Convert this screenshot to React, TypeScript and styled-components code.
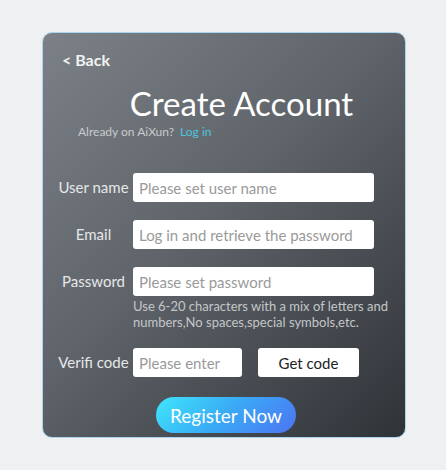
import React from 'react';
import styled, { createGlobalStyle } from 'styled-components';

const GlobalStyle = createGlobalStyle`
  html, body {
    margin: 0;
    padding: 0;
    background: #eef0f2;
    font-family: Lato, "Open Sans", sans-serif;
  }
`;

const Page = styled.div`
  width: 446px;
  height: 470px;
  padding: 32px 0 0 42px;
  box-sizing: border-box;
`;

const Card = styled.div`
  width: 364px;
  height: 406px;
  box-sizing: border-box;
  border: 1px solid #a9d6ec;
  border-radius: 10px;
  background: linear-gradient(135deg, #7c8187 0%, #5f646a 45%, #2f3338 100%);
  padding: 17px 0 0 0;
  display: flex;
  flex-direction: column;
`;

const BackLink = styled.div`
  margin-left: 19px;
  font-size: 16px;
  font-weight: bold;
  color: #f2f2f2;
  line-height: 20px;
`;

const Title = styled.h1`
  margin: 13px 0 0 0;
  text-align: center;
  font-size: 33px;
  font-weight: normal;
  color: #ffffff;
  line-height: 40px;
  padding-left: 35px;
`;

const SubLine = styled.div`
  margin: 1px 0 0 35px;
  font-size: 12px;
  color: #c9cbce;
  line-height: 16px;
`;

const LoginLink = styled.span`
  color: #4cc6dc;
  margin-left: 6px;
`;

const Form = styled.div`
  margin-top: 33px;
  display: flex;
  flex-direction: column;
  gap: 18px;
`;

const Row = styled.div`
  display: flex;
  align-items: flex-start;
`;

const Label = styled.div`
  width: 90px;
  text-align: center;
  font-size: 15px;
  color: #e6e7e9;
  line-height: 29px;
  padding-left: 11px;
  box-sizing: border-box;
  white-space: nowrap;
`;

const Field = styled.div`
  display: flex;
  flex-direction: column;
`;

const Input = styled.input<{ $w: number }>`
  width: ${p => p.$w}px;
  height: 29px;
  box-sizing: border-box;
  border: none;
  border-radius: 3px;
  background: #ffffff;
  padding: 0 6px;
  font-family: inherit;
  font-size: 15px;
  color: #333;
  outline: none;

  &::placeholder {
    color: #9a9a9a;
  }
`;

const Hint = styled.div`
  margin-top: 2px;
  width: 262px;
  font-size: 13px;
  line-height: 16px;
  color: #c4c6c9;
`;

const CodeButton = styled.button`
  margin-left: 16px;
  width: 101px;
  height: 29px;
  border: none;
  border-radius: 3px;
  background: #ffffff;
  font-family: inherit;
  font-size: 15px;
  color: #222;
  cursor: pointer;
`;

const SubmitWrap = styled.div`
  display: flex;
  justify-content: center;
  margin-top: 20px;
  padding-left: 4px;
`;

const SubmitButton = styled.button`
  width: 140px;
  height: 36px;
  border: none;
  border-radius: 18px;
  background: linear-gradient(135deg, #3fe6fb 0%, #3aa9f5 50%, #4d74f3 100%);
  font-family: inherit;
  font-size: 19px;
  color: #ffffff;
  cursor: pointer;
`;

export default function App() {
  return (
    <>
      <GlobalStyle />
      <Page>
        <Card>
          <BackLink>&lt; Back</BackLink>
          <Title>Create Account</Title>
          <SubLine>
            Already on AiXun?<LoginLink>Log in</LoginLink>
          </SubLine>
          <Form>
            <Row>
              <Label>User name</Label>
              <Input $w={241} placeholder="Please set user name" />
            </Row>
            <Row>
              <Label>Email</Label>
              <Input $w={241} placeholder="Log in and retrieve the password" />
            </Row>
            <Row>
              <Label>Password</Label>
              <Field>
                <Input $w={241} type="password" placeholder="Please set password" />
                <Hint>
                  Use 6-20 characters with a mix of letters and numbers,No spaces,special symbols,etc.
                </Hint>
              </Field>
            </Row>
            <Row>
              <Label>Verifi code</Label>
              <Input $w={109} placeholder="Please enter" />
              <CodeButton>Get code</CodeButton>
            </Row>
          </Form>
          <SubmitWrap>
            <SubmitButton>Register Now</SubmitButton>
          </SubmitWrap>
        </Card>
      </Page>
    </>
  );
}
